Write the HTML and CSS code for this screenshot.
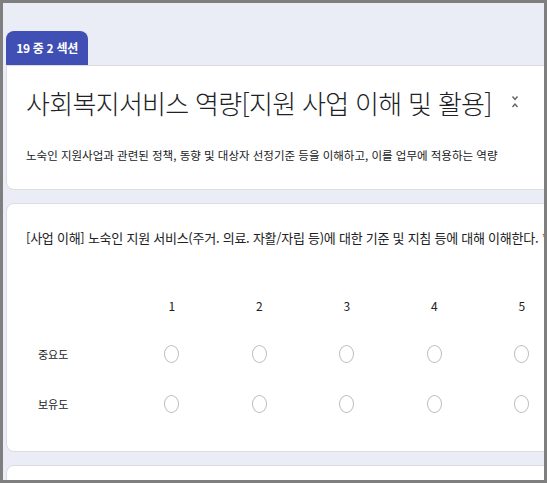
FILE: index.html
```html
<!DOCTYPE html>
<html lang="ko">
<head>
<meta charset="utf-8">
<link rel="stylesheet" href="styles.css">
</head>
<body>
<div class="frame">
  <div class="page">
    <div class="section">
      <div class="tab">19 중 2 섹션</div>
      <div class="card card-head">
        <div class="title-row">
          <h1 class="title">사회복지서비스 역량[지원 사업 이해 및 활용]</h1>
          <svg class="collapse" width="10" height="16" viewBox="0 0 10 16">
            <path d="M2.5 2.5 L5 5.5 L7.5 2.5" fill="none" stroke="#5f6368" stroke-width="1.4"/>
            <path d="M2.5 13 L5 10 L7.5 13" fill="none" stroke="#5f6368" stroke-width="1.4"/>
          </svg>
        </div>
        <p class="desc">노숙인 지원사업과 관련된 정책, 동향 및 대상자 선정기준 등을 이해하고, 이를 업무에 적용하는 역량</p>
      </div>
    </div>

    <div class="card card-q">
      <p class="question">[사업 이해] 노숙인 지원 서비스(주거. 의료. 자활/자립 등)에 대한 기준 및 지침 등에 대해 이해한다. <span class="req">*</span></p>
      <div class="grid">
        <div class="cell head"></div>
        <div class="cell head">1</div>
        <div class="cell head">2</div>
        <div class="cell head">3</div>
        <div class="cell head">4</div>
        <div class="cell head">5</div>

        <div class="cell label">중요도</div>
        <div class="cell"><span class="radio"></span></div>
        <div class="cell"><span class="radio"></span></div>
        <div class="cell"><span class="radio"></span></div>
        <div class="cell"><span class="radio"></span></div>
        <div class="cell"><span class="radio"></span></div>

        <div class="cell label">보유도</div>
        <div class="cell"><span class="radio"></span></div>
        <div class="cell"><span class="radio"></span></div>
        <div class="cell"><span class="radio"></span></div>
        <div class="cell"><span class="radio"></span></div>
        <div class="cell"><span class="radio"></span></div>
      </div>
    </div>

    <div class="card card-next"></div>
  </div>
</div>
</body>
</html>
```

FILE: styles.css
```css
* { box-sizing: border-box; }
html, body { margin: 0; padding: 0; }
body {
  font-family: "Noto Sans CJK KR", "Noto Sans", sans-serif;
  color: #202124;
}
.frame {
  width: 547px;
  height: 483px;
  border: 3px solid #7f7f7f;
  background: #ebedf6;
  overflow: hidden;
}
.page {
  width: 620px;
  padding: 28px 0 0 3px;
  display: flex;
  flex-direction: column;
  gap: 13px;
}
.section {
  display: flex;
  flex-direction: column;
  align-items: flex-start;
}
.tab {
  background: #3f4fb3;
  color: #fff;
  font-weight: 700;
  font-size: 12px;
  height: 34px;
  width: 82px;
  line-height: 34px;
  text-align: center;
  border-radius: 8px 8px 0 0;
  letter-spacing: -0.3px;
}
.card {
  width: 100%;
  background: #fff;
  border: 1px solid #dadce0;
  border-radius: 8px;
}
.card-head {
  border-top-left-radius: 0;
  padding: 19px 0 25px 19px;
}
.title-row {
  display: flex;
  align-items: center;
}
.title {
  margin: 0;
  font-size: 26px;
  line-height: 36px;
  font-weight: 300;
  letter-spacing: -0.7px;
}
.collapse { flex: none; margin: -2px 0 0 18px; }
.desc {
  margin: 25px 0 0;
  font-size: 11.5px;
  line-height: 18px;
  letter-spacing: 0;
}
.card-q {
  padding: 25px 0 22px 19px;
}
.question {
  margin: 0;
  font-size: 13px;
  line-height: 18px;
  white-space: nowrap;
  letter-spacing: -0.25px;
}
.req { color: #d93025; }
.grid {
  margin-top: 34px;
  display: grid;
  grid-template-columns: 102px repeat(5, 87.5px);
  grid-template-rows: 48px 50px 50px;
}
.cell {
  display: flex;
  align-items: center;
  justify-content: center;
  font-size: 12px;
}
.cell.label {
  justify-content: flex-start;
  padding-left: 12px;
  font-size: 11px;
}
.radio {
  width: 15px;
  height: 18px;
  border: 1.5px solid #bdbdbd;
  border-radius: 50%;
}
.card-next {
  height: 40px;
}
```
